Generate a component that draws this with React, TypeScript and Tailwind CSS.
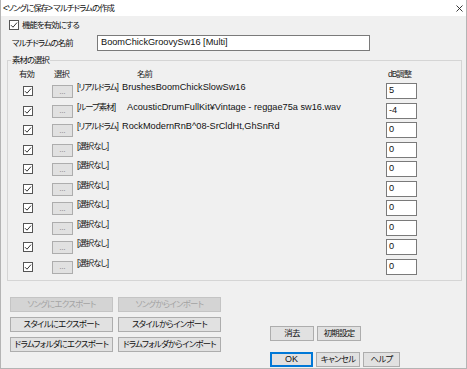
import React from 'react';

type Row = { label: string; name: string; gap: number; db: string };

const rows: Row[] = [
  { label: '[リアルドラム]', name: 'BrushesBoomChickSlowSw16', gap: 45, db: '5' },
  { label: '[ループ素材]', name: 'AcousticDrumFullKit¥Vintage - reggae75a sw16.wav', gap: 50, db: '-4' },
  { label: '[リアルドラム]', name: 'RockModernRnB^08-SrCldHt,GhSnRd', gap: 45, db: '0' },
  { label: '[選択なし]', name: '', gap: 46, db: '0' },
  { label: '[選択なし]', name: '', gap: 46, db: '0' },
  { label: '[選択なし]', name: '', gap: 46, db: '0' },
  { label: '[選択なし]', name: '', gap: 46, db: '0' },
  { label: '[選択なし]', name: '', gap: 46, db: '0' },
  { label: '[選択なし]', name: '', gap: 46, db: '0' },
  { label: '[選択なし]', name: '', gap: 46, db: '0' },
];

// japanese text is drawn narrower than Noto CJK by default
const jp = 'text-[8.4px] tracking-[-0.95px]';

const Check: React.FC<{ className?: string }> = ({ className = '' }) => (
  <span className={`flex items-center justify-center w-[10px] h-[10px] bg-white border border-[#555] ${className}`}>
    <svg width="8" height="8" viewBox="0 0 8 8" fill="none">
      <path d="M1 4.2 L3 6.2 L7 1.6" stroke="#333" strokeWidth="1" />
    </svg>
  </span>
);

const Btn: React.FC<{ children: React.ReactNode; className?: string; disabled?: boolean; primary?: boolean }> = ({
  children,
  className = '',
  disabled,
  primary,
}) => (
  <div
    className={`flex items-center justify-center leading-none whitespace-nowrap ${
      disabled
        ? 'bg-[#d4d4d4] border border-[#c4c4c4] text-[#a3a3a3]'
        : primary
        ? 'bg-[#e1e1e1] border-2 border-[#0078d7] text-[#111]'
        : 'bg-[#e1e1e1] border border-[#adadad] text-[#111]'
    } ${className}`}
  >
    {children}
  </div>
);

export default function App() {
  return (
    <div className="w-[467px] h-[369px] bg-[#f0f0f0] border-x border-b border-[#b4b4b4] font-['Liberation_Sans','Noto_Sans_CJK_JP',sans-serif] text-[9.2px] text-[#111] [font-feature-settings:'palt'] overflow-hidden">
      {/* title bar */}
      <div className="h-[16px] bg-white flex items-center justify-between pl-[2px] pr-[3px]">
        <span className={`leading-none ${jp}`}>&lt;ソングに保存&gt; マルチドラムの作成</span>
        <svg width="7" height="7" viewBox="0 0 7 7">
          <path d="M0.5 0.5 L6.5 6.5 M6.5 0.5 L0.5 6.5" stroke="#222" strokeWidth="0.9" />
        </svg>
      </div>

      {/* enable */}
      <div className="mt-[4px] ml-[8px] h-[10px] flex items-center">
        <Check />
        <span className={`ml-[3px] leading-none ${jp}`}>機能を有効にする</span>
      </div>

      {/* name */}
      <div className="mt-[5px] flex items-center h-[16px]">
        <span className={`ml-[11px] w-[85px] leading-none ${jp}`}>マルチドラムの名前</span>
        <div className="w-[273px] h-[16px] bg-white border border-[#7a7a7a] flex items-center pl-[3px] leading-none">
          BoomChickGroovySw16 [Multi]
        </div>
      </div>

      {/* material group */}
      <fieldset className="mt-[3px] ml-[6px] w-[455px] border border-[#d5d5d5] pb-[4px]">
        <legend className={`ml-[3px] px-[1px] leading-[12px] ${jp}`}>素材の選択</legend>
        <div className={`mt-[2px] h-[13px] flex leading-[13px] text-[#222] ${jp}`}>
          <span className="ml-[11px] w-[35px]">有効</span>
          <span className="w-[83px]">選択</span>
          <span className="w-[251px]">名前</span>
          <span>dB調整</span>
        </div>
        {rows.map((r, i) => (
          <div key={i} className="flex h-[19.5px]">
            <Check className="mt-[5px] ml-[15px] shrink-0" />
            <div className="mt-[4px] ml-[19px] w-[21px] h-[13px] shrink-0 bg-[#e1e1e1] border border-[#adadad] flex items-center justify-center text-[#666] text-[7px] leading-none pb-[1px]">
              ...
            </div>
            <div className="ml-[4px] w-[309px] shrink-0 flex leading-[12px] whitespace-nowrap">
              <span className={jp} style={{ width: r.gap }}>
                {r.label}
              </span>
              <span>{r.name}</span>
            </div>
            <div className="mt-[2px] w-[31px] h-[16px] shrink-0 bg-white border border-[#7a7a7a] flex items-center pl-[2px] leading-none">
              {r.db}
            </div>
          </div>
        ))}
      </fieldset>

      {/* bottom buttons */}
      <div className="flex mt-[16px] text-[8.4px] tracking-[-0.7px]">
        <div className="ml-[9px] grid grid-cols-[103px_103px] gap-x-[5px] gap-y-[5px] auto-rows-[15px]">
          <Btn disabled>ソングにエクスポート</Btn>
          <Btn disabled>ソングからインポート</Btn>
          <Btn>スタイルにエクスポート</Btn>
          <Btn>スタイルからインポート</Btn>
          <Btn>ドラムフォルダにエクスポート</Btn>
          <Btn>ドラムフォルダからインポート</Btn>
        </div>
        <div className="ml-[49px] pt-[29px] flex flex-col gap-[11px]">
          <div className="flex gap-[3px]">
            <Btn className="w-[44px] h-[15px]">消去</Btn>
            <Btn className="w-[44px] h-[15px]">初期設定</Btn>
          </div>
          <div className="flex gap-[3px]">
            <Btn primary className="w-[43px] h-[15px] tracking-normal text-[9px]">OK</Btn>
            <Btn className="w-[44px] h-[15px]">キャンセル</Btn>
            <Btn className="w-[37px] h-[15px]">ヘルプ</Btn>
          </div>
        </div>
      </div>
    </div>
  );
}
